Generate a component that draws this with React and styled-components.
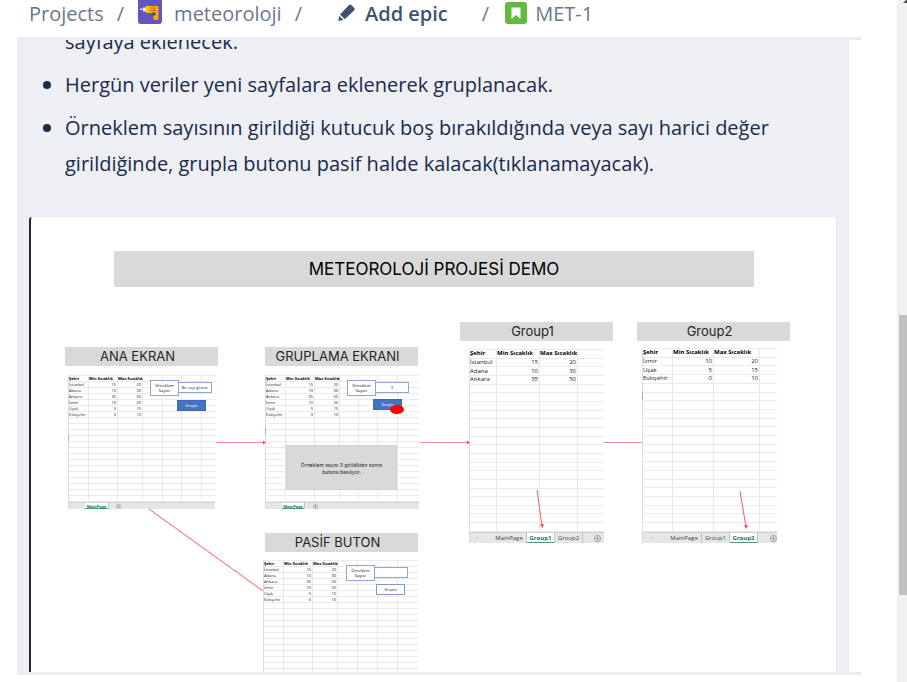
import React from "react";
import styled, { createGlobalStyle } from "styled-components";

const GlobalStyle = createGlobalStyle`
  * { box-sizing: border-box; }
  body { margin: 0; background: #fff; overflow: hidden; }
  button, input { font: inherit; margin: 0; }
`;

const Page = styled.div`
  display: flex;
  height: 100vh;
  font-family: "Open Sans", "Noto Sans", sans-serif;
  font-size: 20px;
  color: #172b4d;
`;

const Column = styled.div`
  flex: 1;
  min-width: 0;
  display: flex;
  flex-direction: column;
  padding: 0 36px 7px 17px;
`;

const Breadcrumbs = styled.nav`
  flex: none;
  display: flex;
  align-items: flex-start;
  height: 40px;
  padding-left: 12px;
  border-bottom: 3px solid #ebecf0;
  line-height: 28px;
  white-space: nowrap;
`;

const Crumb = styled.a`
  display: flex;
  gap: ${(p) => p.$gap || 12}px;
  color: #6b778c;
  text-decoration: none;
`;

const EpicButton = styled.button`
  display: flex;
  gap: 9px;
  padding: 0;
  margin: 0 34px 0 22px;
  border: 0;
  background: none;
  color: #42526e;
  font-weight: 600;
  line-height: 28px;
`;

const Slash = styled.span`
  margin: 0 ${(p) => p.$after || 14}px 0 ${(p) => p.$before ?? 13}px;
  color: #6b778c;
`;

const Icon = styled.svg`
  flex: none;
  width: ${(p) => p.$size}px;
  height: ${(p) => p.$size}px;
  margin-top: ${(p) => p.$top || 0}px;
`;

const Viewport = styled.main`
  flex: 1;
  min-height: 0;
  overflow: hidden;
  display: flex;
  flex-direction: column;
  margin-right: 12px;
  padding: 0 12px;
  background: #eeeff3;
`;

const BottomRule = styled.div`
  flex: none;
  height: 3px;
  background: #ebecf0;
`;

const Notes = styled.ul`
  flex: none;
  margin: -16px 0 35px;
  padding: 0 60px 0 36px;
  list-style: none;
  line-height: 36px;
  font-weight: 370;
`;

const Note = styled.li`
  position: relative;
  & + & { margin-top: 7px; }
  &::before {
    content: "";
    display: ${(p) => (p.$continued ? "none" : "block")};
    position: absolute;
    left: -22px;
    top: 14px;
    width: 8px;
    height: 8px;
    border-radius: 50%;
    background: #172b4d;
  }
`;

const Canvas = styled.section`
  flex: 1;
  min-height: 0;
  position: relative;
  overflow: hidden;
  background: #fff;
  border-left: 2px solid #23272b;
  border-right: 1px solid #e6e6e8;
  border-radius: 3px 3px 0 0;
  font-family: Inter, sans-serif;
  color: #262626;
`;

const Place = styled.div`
  position: absolute;
  left: ${(p) => p.$x - 31}px;
  top: ${(p) => p.$y - 217}px;
  width: ${(p) => p.$w}px;
`;

const Banner = styled.h1`
  margin: 0;
  height: 36px;
  background: #d9d9d9;
  color: #000;
  font-size: 17px;
  font-weight: 400;
  line-height: 36px;
  text-align: center;
`;

const Caption = styled.h2`
  margin: 0;
  height: 19px;
  padding-right: 8px;
  background: #d9d9d9;
  font-size: 13px;
  font-weight: 400;
  line-height: 18px;
  text-align: center;
`;

const Sheet = styled.div`
  border-left: 1px solid #dcdcdc;
  font-family: "Open Sans", sans-serif;
  color: #222;
`;

const Grid = styled.table`
  table-layout: fixed;
  width: 100%;
  height: ${(p) => p.$h}px;
  border-collapse: separate;
  border-spacing: 0;
  border-top: 1px solid #ececec;
  font-size: ${(p) => p.$font}px;
  line-height: ${(p) => p.$line}px;
  tr { height: ${(p) => p.$line + 1}px; }
  th, td {
    padding: 0 1px 0 0;
    border-right: 1px solid #e8e8e8;
    border-bottom: 1px solid #ebebeb;
    white-space: nowrap;
    text-align: right;
    font-weight: 400;
  }
  th { color: #000; font-weight: 700; }
  th, td:first-child { text-align: left; }
  tr > :last-child { border-right: 0; }
`;

const Col = styled.col`
  width: ${(p) => p.$w}px;
`;

const Tabs = styled.div`
  display: flex;
  align-items: stretch;
  height: ${(p) => (p.$large ? 11 : 7)}px;
  padding-left: ${(p) => p.$pad}px;
  background: #e6e6e6;
  border-top: 1px solid #cfcfcf;
  font-size: ${(p) => (p.$large ? 6 : 4)}px;
  line-height: ${(p) => (p.$large ? 9 : 5)}px;
`;

const Arrow = styled.span`
  width: ${(p) => p.$w}px;
  color: #aaa;
`;

const Tab = styled.button`
  flex: none;
  width: ${(p) => p.$w}px;
  padding: 0;
  border: 0;
  border-right: 1px solid #c4c4c4;
  background: ${(p) => (p.$active ? "#fff" : "none")};
  box-shadow: ${(p) => (p.$active ? "inset 0 -1px #4f9a72" : "none")};
  color: ${(p) => (p.$active ? "#217346" : "#444")};
  font-weight: ${(p) => (p.$active ? 700 : 400)};
  line-height: inherit;
  white-space: nowrap;
`;

const AddTab = styled.button`
  display: flex;
  align-items: center;
  justify-content: center;
  width: 8px;
  margin-left: auto;
  margin-right: ${(p) => p.$right}px;
  padding: 0;
  border: 0;
  background: none;
`;

const AddIcon = styled.svg`
  flex: none;
  width: ${(p) => p.$size}px;
  height: ${(p) => p.$size}px;
`;

const CellMark = styled.div`
  width: 1px;
  height: ${(p) => p.$h}px;
  background: #8fc3a6;
`;

const SampleLabel = styled.label`
  display: block;
  height: 16px;
  padding-top: 2px;
  border: 1px solid #8fa5d2;
  background: #fff;
  font: 4px/5px "Open Sans", sans-serif;
  color: #000;
  text-align: center;
`;

const SampleInput = styled.input`
  display: block;
  width: 100%;
  height: 11px;
  padding: 0;
  border: 1px solid #8fa5d2;
  border-radius: 0;
  background: #fff;
  font: 4px/8px "Open Sans", sans-serif;
  color: #222;
  text-align: center;
`;

const GroupButton = styled.button`
  display: block;
  width: 100%;
  height: 11px;
  padding: 0;
  border: 1px solid ${(p) => (p.disabled ? "#7f98cc" : "#3d69b4")};
  background: ${(p) => (p.disabled ? "#fff" : "#4472c4")};
  color: ${(p) => (p.disabled ? "#222" : "#fff")};
  font: 4px/8px "Open Sans", sans-serif;
`;

const Pointer = styled.div`
  height: 9px;
  border-radius: 50%;
  background: #f00;
`;

const Remark = styled.p`
  display: flex;
  align-items: center;
  justify-content: center;
  height: 45px;
  margin: 0;
  padding-top: 3px;
  background: #d9d9d9;
  border: 1px solid #d0d0d0;
  font-size: 5px;
  line-height: 7px;
  text-align: center;
`;

const Connectors = styled.svg`
  position: absolute;
  left: 0;
  top: 0;
  width: 805px;
  height: 455px;
  pointer-events: none;
`;

const Scrollbar = styled.div`
  flex: none;
  display: flex;
  flex-direction: column;
  width: 10px;
  padding-left: 2px;
  background: #f1f1f1;
`;

const ScrollUp = styled.svg`
  flex: none;
  width: 8px;
  height: 4px;
`;

const Thumb = styled.div`
  height: 41%;
  margin-top: 311px;
  background: #c1c1c1;
`;

const HEADINGS = ["Şehir", "Min Sıcaklık", "Max Sıcaklık"];
const ISTANBUL = ["İstanbul", 15, 20];
const ADANA = ["Adana", 10, 30];
const ANKARA = ["Ankara", 35, 50];
const IZMIR = ["İzmir", 10, 20];
const USAK = ["Uşak", 5, 15];
const ESKISEHIR = ["Eskişehir", 0, 10];
const ALL_CITIES = [ISTANBUL, ADANA, ANKARA, IZMIR, USAK, ESKISEHIR];

function DataGrid({ cols, data, count, height, large }) {
  const blanks = Array.from({ length: count - data.length - 1 });
  return (
    <Grid $h={height} $font={large ? 6 : 4} $line={large ? 7 : 5}>
      <colgroup>{cols.map((w, i) => <Col key={i} $w={w} />)}</colgroup>
      <tbody>
        <tr>
          {cols.map((_, i) => <th key={i}>{HEADINGS[i]}</th>)}
        </tr>
        {data.map((row) => (
          <tr key={row[0]}>{cols.map((_, i) => <td key={i}>{row[i]}</td>)}</tr>
        ))}
        {blanks.map((_, r) => (
          <tr key={r}>{cols.map((_, i) => <td key={i} />)}</tr>
        ))}
      </tbody>
    </Grid>
  );
}

function SampleForm({ id, x, y, value, placeholder, buttonX, buttonY, disabled }) {
  return (
    <>
      <Place $x={x + 28} $y={y + 2} $w={34}>
        <SampleInput id={id} defaultValue={value || placeholder} />
      </Place>
      <Place $x={x} $y={y} $w={29}>
        <SampleLabel htmlFor={id}>Örneklem<br />Sayısı:</SampleLabel>
      </Place>
      <Place $x={buttonX} $y={buttonY} $w={29}>
        <GroupButton disabled={disabled}>Grupla</GroupButton>
      </Place>
    </>
  );
}

function AddSheet({ size, right }) {
  return (
    <AddTab $right={right} aria-label="Sayfa ekle">
      <AddIcon $size={size} viewBox="0 0 14 14" fill="none" stroke="#8a8a8a" strokeWidth="1.500">
        <circle cx="7" cy="7" r="6" />
        <path d="M7 3.500v7M3.500 7h7" />
      </AddIcon>
    </AddTab>
  );
}

function MainTabs({ tabWidth, right }) {
  return (
    <Tabs $pad={5}>
      <Arrow $w={11}>›</Arrow>
      <Tab $w={tabWidth} $active>MainPage</Tab>
      <AddSheet size={5} right={right} />
    </Tabs>
  );
}

function GroupTabs({ active, pad, widths, right }) {
  return (
    <Tabs $large $pad={pad}>
      <Arrow $w={16}>›</Arrow>
      {["MainPage", "Group1", "Group2"].map((name, i) => (
        <Tab key={name} $w={widths[i]} $active={name === active}>{name}</Tab>
      ))}
      <AddSheet size={7} right={right} />
    </Tabs>
  );
}

const CAPTIONS = [
  ["ANA EKRAN", 65, 347],
  ["GRUPLAMA EKRANI", 265, 347],
  ["Group1", 460, 322],
  ["Group2", 637, 322],
  ["PASİF BUTON", 265, 533],
];

function Diagram() {
  return (
    <Canvas>
      <Place $x={114} $y={251} $w={640}><Banner>METEOROLOJİ PROJESİ DEMO</Banner></Place>
      {CAPTIONS.map(([text, x, y]) => (
        <Place key={text} $x={x} $y={y} $w={153}><Caption>{text}</Caption></Place>
      ))}

      <Place $x={68} $y={375} $w={147}>
        <Sheet>
          <DataGrid cols={[20, 29, 25, 20, 19, 20, 13]} data={ALL_CITIES} count={21} height={127} />
          <MainTabs tabWidth={24} right={93} />
        </Sheet>
      </Place>
      <Place $x={68} $y={435} $w={1}><CellMark $h={6} /></Place>
      <SampleForm id="sample-main" x={150} y={380} placeholder="Bir sayı giriniz." buttonX={177} buttonY={400} />

      <Place $x={265} $y={375} $w={154}>
        <Sheet>
          <DataGrid cols={[20, 29, 25, 19, 19, 20, 21]} data={ALL_CITIES} count={21} height={126} />
          <MainTabs tabWidth={23} right={100} />
        </Sheet>
      </Place>
      <Place $x={265} $y={428} $w={1}><CellMark $h={6} /></Place>
      <SampleForm id="sample-group" x={347} y={380} value="3" buttonX={373} buttonY={399} />
      <Place $x={390} $y={405} $w={14}><Pointer /></Place>
      <Place $x={286} $y={445} $w={111}>
        <Remark>Örneklem sayısı 3 girildikten sonra<br />butona basılıyor.</Remark>
      </Place>

      <Place $x={469} $y={349} $w={135}>
        <Sheet>
          <DataGrid large cols={[27, 43, 38, 26]} data={[ISTANBUL, ADANA, ANKARA]} count={21} height={183} />
          <GroupTabs active="Group1" pad={6} widths={[35, 28, 28]} right={3} />
        </Sheet>
      </Place>

      <Place $x={642} $y={348} $w={135}>
        <Sheet>
          <DataGrid large cols={[30, 41, 46, 17]} data={[IZMIR, USAK, ESKISEHIR]} count={21} height={184} />
          <GroupTabs active="Group2" pad={8} widths={[35, 28, 28]} right={0} />
        </Sheet>
      </Place>
      <Place $x={642} $y={391} $w={1}><CellMark $h={9} /></Place>

      <Place $x={263} $y={560} $w={155}>
        <Sheet>
          <DataGrid cols={[20, 29, 25, 20, 20, 20, 20]} data={ALL_CITIES} count={20} height={121} />
        </Sheet>
      </Place>
      <SampleForm id="sample-passive" x={346} y={565} buttonX={376} buttonY={584} disabled />

      <Connectors viewBox="31 217 805 455" fill="none" stroke="#fa8b8b" strokeWidth="1">
        <path d="M216 442.500H265M420 442.500H469M604 442.500H642" />
        <path d="M263 440.500l3 2-3 2zM467 440.500l3 2-3 2z" fill="#ff4b4b" stroke="none" />
        <path d="M149 509L263 591M537 490l5 36M740 491l6 36" stroke="#ff5c5c" />
        <path d="M540 524.500l4-.5-1.500 4zM744 525.500l4-.5-1.500 4z" fill="#ff4b4b" stroke="none" />
      </Connectors>
    </Canvas>
  );
}

export default function App() {
  return (
    <>
      <GlobalStyle />
      <Page>
        <Column>
          <Breadcrumbs aria-label="Breadcrumbs">
            <Crumb href="#projects">Projects</Crumb>
            <Slash>/</Slash>
            <Crumb href="#meteoroloji">
              <Icon $size={24} viewBox="0 0 24 24" aria-hidden="true">
                <path d="M0 0h24v21a3 3 0 0 1-3 3H3a3 3 0 0 1-3-3z" fill="#6554c0" />
                <path d="M2 8.500h4v1.500H2z" fill="#b3d4ff" />
                <path d="M5 7.500h3v4H5z" fill="#deebff" />
                <path d="M8 6h11c1 0 1.500.5 1.500 1.300V18.500c0 .8-.6 1.500-1.500 1.500h-2c-.9 0-1.500-.6-1.500-1.300V13H8z" fill="#ffab00" />
                <path d="M8 6h3v7H8z" fill="#ffc400" />
                <path d="M13 8h5M13 10.500h5" stroke="#a56b14" />
                <path d="M14 12.500h3.500V15L15 16z" fill="#42526e" />
              </Icon>
              meteoroloji
            </Crumb>
            <Slash>/</Slash>
            <EpicButton>
              <Icon $size={18} $top={4} viewBox="0 0 18 18" aria-hidden="true">
                <path d="M2 10.500L10.800 1.300a2 2 0 0 1 2.800 0L16 3.700a2 2 0 0 1 0 2.800L6.800 15.200z" fill="#42526e" />
                <path d="M1.200 11.800l4.200 4.200L.3 17z" fill="#42526e" />
              </Icon>
              Add epic
            </EpicButton>
            <Slash $before={0} $after={16}>/</Slash>
            <Crumb href="#met-1" $gap={8}>
              <Icon $size={22} $top={2} viewBox="0 0 22 22" aria-hidden="true">
                <rect width="22" height="22" rx="3" fill="#63ba3c" />
                <path d="M6.500 5.500h9V17L11 13l-4.500 4z" fill="#fff" />
              </Icon>
              MET-1
            </Crumb>
          </Breadcrumbs>
          <Viewport>
            <Notes>
              <Note $continued>sayfaya eklenecek.</Note>
              <Note>Hergün veriler yeni sayfalara eklenerek gruplanacak.</Note>
              <Note>
                Örneklem sayısının girildiği kutucuk boş bırakıldığında veya sayı harici değer
                girildiğinde, grupla butonu pasif halde kalacak(tıklanamayacak).
              </Note>
            </Notes>
            <Diagram />
          </Viewport>
          <BottomRule />
        </Column>
        <Scrollbar aria-hidden="true">
          <ScrollUp viewBox="0 0 8 4"><path d="M4 3l4-4v4z" fill="#505050" /></ScrollUp>
          <Thumb />
        </Scrollbar>
      </Page>
    </>
  );
}
